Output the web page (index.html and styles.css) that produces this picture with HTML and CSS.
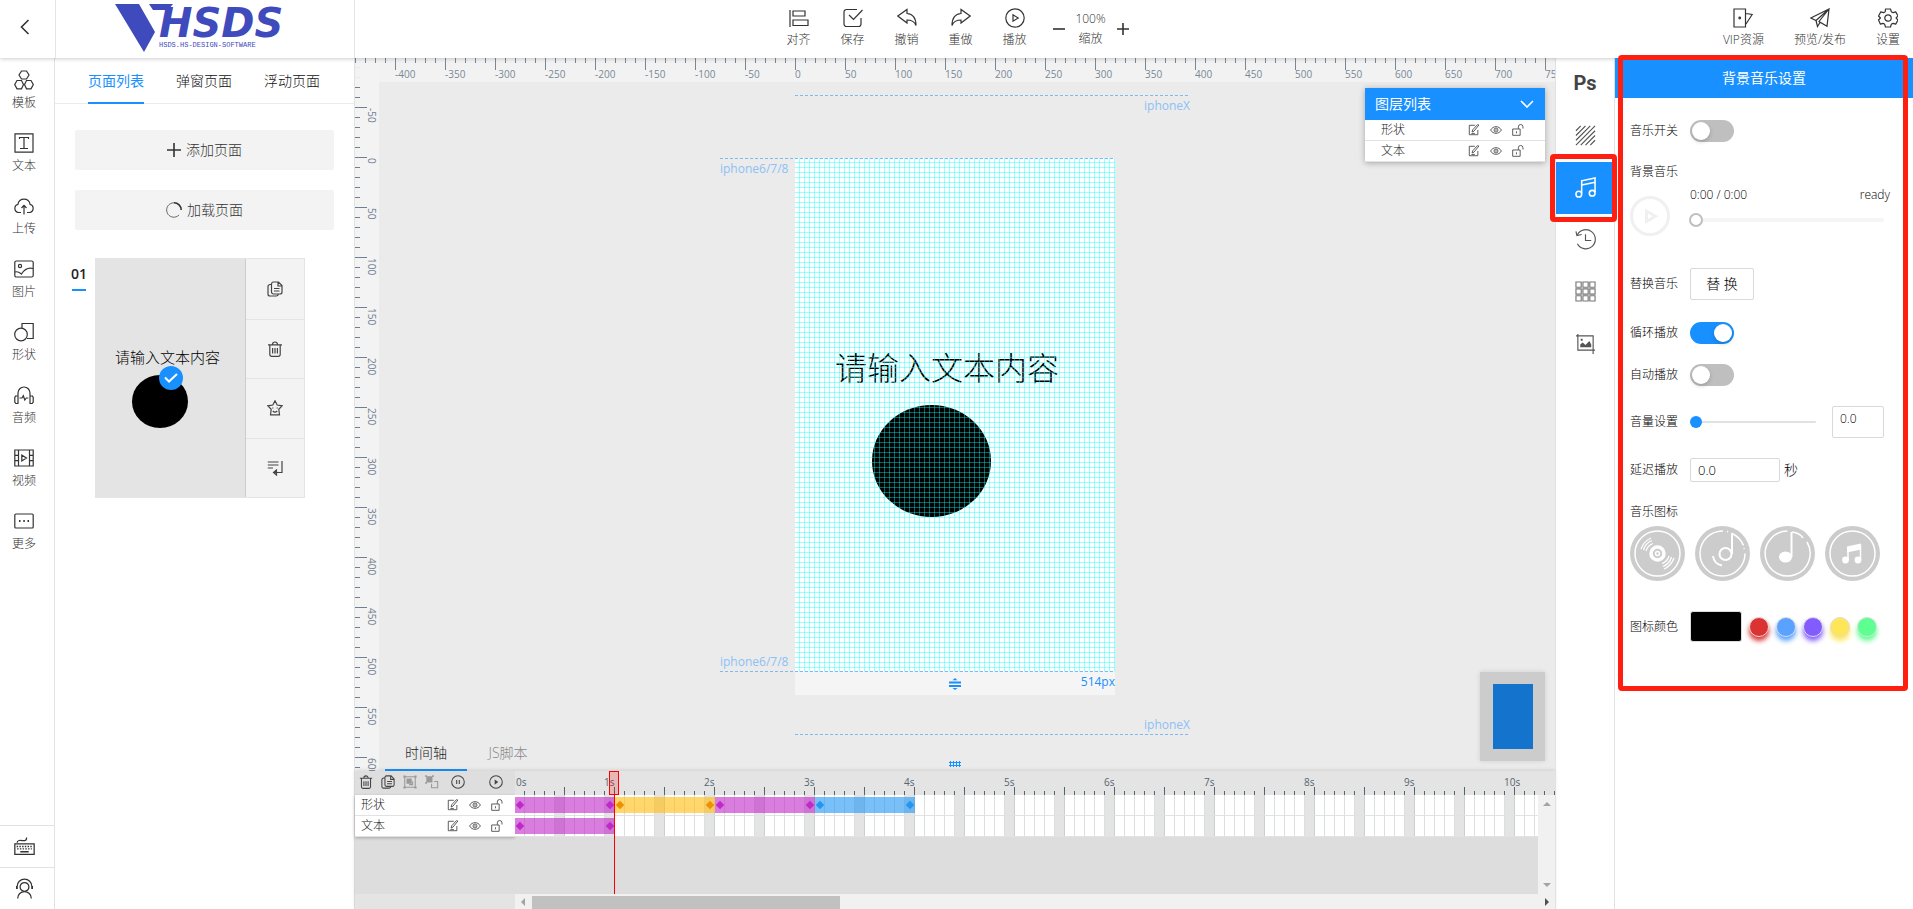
FILE: index.html
```html
<!DOCTYPE html>
<html lang="zh-CN">
<head>
<meta charset="utf-8">
<title>HSDS</title>
<link rel="stylesheet" href="styles.css">
</head>
<body>
<svg class="sprite" aria-hidden="true">
  <symbol id="i-edit" viewBox="0 0 14 14"><path d="M8 1.5H1.5v11h10V7M12.7 1.2 7 8.3l-2.2 1 .6-2.5L11 .8zM4 11h4"/></symbol>
  <symbol id="i-eye" viewBox="0 0 14 14"><path d="M.7 7C3.6 1.800 10.400 1.800 13.300 7 10.400 12.200 3.600 12.200.7 7z"/><circle cx="7" cy="7" r="2.3"/><circle cx="7" cy="7" r=".4"/></symbol>
  <symbol id="i-lock" viewBox="0 0 14 14"><path d="M.8 5.8h8.700v7.400H.8zM5.200 8.500v2.400M7.400 5.600V3.300a2.700 2.700 0 0 1 5.400 0v2"/></symbol>
  <symbol id="i-copy" viewBox="0 0 16 16"><path d="M6 1h5.500L15 4.500V11a2 2 0 0 1-2 2H6.500a2 2 0 0 1-2-2V3a2 2 0 0 1 1.500-2zM11 1v4h4M7 7.500h5.500M7 10h5.500M4.500 3.500H3a2 2 0 0 0-2 2V13a2 2 0 0 0 2 2h6.500a2 2 0 0 0 1.800-2"/></symbol>
  <symbol id="i-trash" viewBox="0 0 16 16"><path d="M1 3.800h14M5.500 3.500a2.500 2.500 0 0 1 5 0M2.800 4v9.500a1.800 1.800 0 0 0 1.800 1.800h6.800a1.800 1.800 0 0 0 1.800-1.800V4M5.600 7v5.500M8 7v5.500M10.400 7v5.500"/></symbol>
</svg>

<header class="topbar">
  <button class="back" aria-label="返回"><svg viewBox="0 0 10 16" width="10" height="16"><path d="M8.500 1 1.500 8l7 7"/></svg></button>
  <div class="brand">
    <svg width="184" height="50" viewBox="0 0 184 50" role="img" aria-label="VHSDS">
      <path class="mark" d="M2 0h24l16 28-11 20zM36 0h24l-5 6H40z"/>
      <text class="brand-name" x="46" y="33">HSDS</text>
      <text class="brand-sub" x="46" y="43">HSDS.HS-DESIGN-SOFTWARE</text>
    </svg>
  </div>
  <nav class="tools">
    <button class="tool"><svg viewBox="0 0 20 20"><path d="M1 2v17M4 3h12v5H4zM4 12h15v5.500H4z"/></svg>对齐</button>
    <button class="tool"><svg viewBox="0 0 20 20"><path d="M14 1.500H3.500a2.500 2.500 0 0 0-2.500 2.500v12a2.500 2.500 0 0 0 2.500 2.500h12a2.500 2.500 0 0 0 2.500-2.500V10M6 7l4.500 4.500L19.500 2"/></svg>保存</button>
    <button class="tool"><svg viewBox="0 0 20 20"><path d="M.800 8 10 1.500V5.500c6 .5 9 5 9 12-1.500-4-4-5.500-9-5.500v3z"/></svg>撤销</button>
    <button class="tool"><svg viewBox="0 0 20 20"><path d="M19.200 8 10 1.500V5.500c-6 .5-9 5-9 12 1.500-4 4-5.500 9-5.500v3z"/></svg>重做</button>
    <button class="tool"><svg viewBox="0 0 20 20"><circle cx="10" cy="10" r="9.200"/><path d="M8 6.800v6.400l5.200-3.200z"/></svg>播放</button>
    <div class="zoom">
      <button aria-label="缩小"><svg viewBox="0 0 12 12" width="12" height="12"><path d="M0 6h12"/></svg></button>
      <div class="zoom-value"><span>100%</span><span>缩放</span></div>
      <button aria-label="放大"><svg viewBox="0 0 12 12" width="12" height="12"><path d="M0 6h12M6 0v12"/></svg></button>
    </div>
  </nav>
  <nav class="actions">
    <button class="tool"><svg viewBox="0 0 20 20"><path d="M1 1h11.500v18H1zM13 5.500l6.200 1L13 16"/><circle cx="6.700" cy="10" r=".8"/></svg>VIP资源</button>
    <button class="tool"><svg viewBox="0 0 20 20"><path d="M19 1 .800 10l5.200 2.500zM6 12.500 7.500 18.500 10 14.500M19 1 9 13.500l8 4.800z"/></svg>预览/发布</button>
    <button class="tool"><svg viewBox="0 0 20 20"><path d="M7.500 1h5l.8 2.700 1.700 1 2.700-.8 2.300 4.100-1.900 2 1.900 2-2.300 4.100-2.700-.8-1.700 1-.8 2.700h-5l-.8-2.700-1.700-1-2.700.8L0.500 12l1.900-2-1.900-2L2.800 3.900l2.700.8 1.700-1z" stroke-linejoin="round"/><circle cx="10" cy="10" r="3.200"/></svg>设置</button>
  </nav>
</header>

<main class="main">
  <nav class="rail">
    <button class="rail-item"><svg viewBox="0 0 20 20"><path d="M7.500 1h5L15 5l-2.500 4h-5L5 5zM3 10.500h4.500L9.500 14.500 7.500 18.800H3L.7 14.500zM12.500 10.500H17l2.300 4-2.300 4.300h-4.500l-2-4.300z"/></svg>模板</button>
    <button class="rail-item"><svg viewBox="0 0 20 20"><path d="M1 .800h18v18.400H1zM5.500 6V4.500h9V6M10 4.500v11M6 15.500h8"/></svg>文本</button>
    <button class="rail-item"><svg viewBox="0 0 20 20"><path d="M7 16.500H4.500a4.200 4.200 0 0 1-.6-8.200 6.200 6.200 0 0 1 12.200 0 4.200 4.200 0 0 1-.6 8.200H13M10 18.500V9.500M7.500 12 10 9.300 12.500 12"/></svg>上传</button>
    <button class="rail-item"><svg viewBox="0 0 20 20"><rect x=".8" y="2" width="18.400" height="16" rx="1.500"/><circle cx="6" cy="7" r="1.600"/><path d="M1 13c3-1 4 0 6.500 2C10 11 13 8 19 9.500"/></svg>图片</button>
    <button class="rail-item"><svg viewBox="0 0 20 20"><circle cx="7" cy="12.500" r="6.300"/><path d="M8 6V1.500h11.200v15H13"/></svg>形状</button>
    <button class="rail-item"><svg viewBox="0 0 20 20"><path d="M4 11V8a6 6 0 0 1 12 0v3M4 11H1.500l-.7 1.500V17l1 1.500H4zM16 11h2.500l.7 1.500V17l-1 1.500H16zM5.500 13H8l1.300-2.300 1.500 4.300 1.500-2h2"/></svg>音频</button>
    <button class="rail-item"><svg viewBox="0 0 20 20"><path d="M.800 2h18.400v16H.800zM4.500 2v16M15.500 2v16M1 7.300h3.500M1 12.600h3.500M15.500 7.300H19M15.500 12.600H19M7.800 7v6l4.700-3z"/></svg>视频</button>
    <button class="rail-item"><svg viewBox="0 0 20 20"><rect x=".8" y="3" width="18.400" height="14" rx="1"/><path d="M5 10h1.500M9.300 10h1.500M13.500 10H15" stroke-width="1.800"/></svg>更多</button>
    <div class="rail-bottom">
      <button aria-label="快捷键"><svg viewBox="0 0 20 20" width="21" height="21"><path d="M.800 7.500h18.400v10H.800z"/><path d="M2.500 10h15M3 12.300h14" stroke-dasharray="1.400 1.200"/><path d="M6 15h8M3 6.500C3 3 8 4.500 10 4.500S12 2.500 12 1.500"/></svg></button>
      <button aria-label="客服"><svg viewBox="0 0 20 20" width="21" height="21"><circle cx="10" cy="8.500" r="4.200"/><path d="M3 10.500V8a7 7 0 0 1 14 0v2.500M2.500 7.500v3M17.500 7.500v3M3.500 19.500c0-4 3-6.500 6.500-6.500s6.500 2.500 6.500 6.500"/></svg></button>
    </div>
  </nav>

  <section class="pages">
    <div class="tabs" role="tablist">
      <button class="tab active" role="tab">页面列表</button>
      <button class="tab" role="tab">弹窗页面</button>
      <button class="tab" role="tab">浮动页面</button>
    </div>
    <div class="page-actions">
      <button class="wide"><svg viewBox="0 0 14 14" width="14" height="14"><path d="M0 7h14M7 0v14"/></svg>添加页面</button>
      <button class="wide"><svg viewBox="0 0 16 16" width="16" height="16"><path d="M8 .800A7.200 7.200 0 0 1 15.200 8"/><path class="faint" d="M8 .800A7.200 7.200 0 1 0 13 13"/></svg>加载页面</button>
    </div>
    <div class="page-row">
      <span class="page-no">01</span>
      <div class="page-card">
        <div class="thumb">
          <span class="thumb-text">请输入文本内容</span>
          <span class="thumb-dot"></span>
          <span class="thumb-check"><svg viewBox="0 0 14 10" width="14" height="10"><path d="M1 4.500 5 8.500 13 1"/></svg></span>
        </div>
        <div class="page-tools">
          <button aria-label="复制"><svg width="16" height="16"><use href="#i-copy"/></svg></button>
          <button aria-label="删除"><svg width="16" height="16"><use href="#i-trash"/></svg></button>
          <button aria-label="收藏"><svg viewBox="0 0 16 16" width="16" height="16"><path d="M8 .800 10.200 5l4.900.800-3.300 3.500.7 5.600H3.500l.7-5.600L.9 5.800 5.800 5zM5.800 7.500v1M10.200 7.500v1M5.800 11c1.300 1.500 3.100 1.500 4.400 0"/></svg></button>
          <button aria-label="插入"><svg viewBox="0 0 16 16" width="16" height="16"><path d="M.800 2h10.700M.800 5h10.700M.800 8H6M15 1v11.500H7M9.500 10 6.500 12.500l3 2.500z"/></svg></button>
        </div>
      </div>
    </div>
  </section>

  <section class="stage">
    <div class="workspace">
      <div class="ruler ruler-v"><i></i><i>-50</i><i>0</i><i>50</i><i>100</i><i>150</i><i>200</i><i>250</i><i>300</i><i>350</i><i>400</i><i>450</i><i>500</i><i>550</i><i>600</i></div>
      <div class="ruler ruler-h"><i></i><i>-400</i><i>-350</i><i>-300</i><i>-250</i><i>-200</i><i>-150</i><i>-100</i><i>-50</i><i>0</i><i>50</i><i>100</i><i>150</i><i>200</i><i>250</i><i>300</i><i>350</i><i>400</i><i>450</i><i>500</i><i>550</i><i>600</i><i>650</i><i>700</i><i>750</i></div>

      <div class="board">
        <div class="guide guide-x-top"><span>iphoneX</span></div>
        <div class="guide guide-6-top"><span>iphone6/7/8</span></div>
        <div class="artboard">
          <div class="art-text">请输入文本内容</div>
          <div class="art-circle"></div>
          <div class="art-grid"></div>
        </div>
        <div class="guide guide-6-bottom"><span>iphone6/7/8</span></div>
        <div class="board-foot">
          <svg viewBox="0 0 12 12" width="12" height="12"><path d="M0 3.500h12v2H0zM0 7h12v2H0zM6 0l2.500 2.200h-5zM6 12l2.500-2H3.500z"/></svg>
          <span>514px</span>
        </div>
        <div class="guide guide-x-bottom"><span>iphoneX</span></div>
      </div>

      <aside class="layers">
        <header>图层列表<svg viewBox="0 0 14 8" width="14" height="8"><path d="M1 1l6 6 6-6"/></svg></header>
        <div class="layer"><span>形状</span><svg><use href="#i-edit"/></svg><svg><use href="#i-eye"/></svg><svg><use href="#i-lock"/></svg></div>
        <div class="layer"><span>文本</span><svg><use href="#i-edit"/></svg><svg><use href="#i-eye"/></svg><svg><use href="#i-lock"/></svg></div>
      </aside>

      <div class="minimap"><span></span></div>
      <div class="grip"></div>
      <div class="bottom-tabs" role="tablist">
        <button class="active" role="tab">时间轴</button>
        <button role="tab">JS脚本</button>
      </div>
    </div>

    <div class="timeline">
      <div class="track-names">
        <div class="track-tools">
          <button aria-label="删除"><svg><use href="#i-trash"/></svg></button>
          <button aria-label="复制"><svg><use href="#i-copy"/></svg></button>
          <button class="off" aria-label="组合"><svg viewBox="0 0 16 16"><path d="M2 2h12v12H2z"/><path class="solid" d="M4 4h6v6H4zM.500.500h2.500v2.500H.500zM13 .500h2.500v2.500H13zM.500 13h2.500v2.500H.500zM13 13h2.500v2.500H13z"/><path d="M11 7v4H7"/></svg></button>
          <button class="off" aria-label="取消组合"><svg viewBox="0 0 16 16"><path class="solid" d="M1.500 1.500h7v7h-7zM.200.200h2v2h-2zM8 .200h2v2H8zM.200 8h2v2h-2z"/><path d="M7.500 10v4.500h7v-7h-4"/></svg></button>
          <button aria-label="暂停"><svg viewBox="0 0 16 16"><circle cx="8" cy="8" r="7.200"/><path d="M6.500 5.800v4.400M9.500 5.800v4.400"/></svg></button>
          <button class="play" aria-label="播放"><svg viewBox="0 0 16 16"><circle cx="8" cy="8" r="7.200"/><path class="solid" d="M6.500 5v6l4-3z"/></svg></button>
        </div>
        <div class="name-list">
          <div class="layer"><span>形状</span><svg><use href="#i-edit"/></svg><svg><use href="#i-eye"/></svg><svg><use href="#i-lock"/></svg></div>
          <div class="layer"><span>文本</span><svg><use href="#i-edit"/></svg><svg><use href="#i-eye"/></svg><svg><use href="#i-lock"/></svg></div>
        </div>
        <div class="names-foot"></div>
      </div>
      <div class="tracks">
        <div class="seconds"><i>0s</i><i>1s</i><i>2s</i><i>3s</i><i>4s</i><i>5s</i><i>6s</i><i>7s</i><i>8s</i><i>9s</i><i>10s</i></div>
        <div class="track-body">
          <div class="track-area">
            <div class="track"><span class="clip magenta"></span><span class="clip amber"></span><span class="clip magenta"></span><span class="clip blue"></span></div>
            <div class="track"><span class="clip magenta"></span></div>
          </div>
          <div class="vscroll"><i class="up"></i><i class="down"></i></div>
        </div>
        <div class="hscroll"><i class="left"></i><span></span><i class="right"></i></div>
        <div class="playhead"></div>
      </div>
    </div>
  </section>

  <nav class="side">
    <button class="ps">Ps</button>
    <button aria-label="背景"><svg viewBox="0 0 22 22"><path d="M1 6 6 1M1 11 11 1M1 16 16 1M1 21 21 1M6 21 21 6M11 21 21 11M16 21l5-5"/></svg></button>
    <button class="active" aria-label="背景音乐"><svg viewBox="0 0 22 22"><path d="M7 17V4l14-3v15M7 8.500 21 5.500"/><circle cx="4" cy="18" r="3"/><circle cx="18" cy="17" r="3"/></svg></button>
    <button aria-label="历史"><svg viewBox="0 0 22 22"><path d="M2.500 6a10 10 0 1 1 0 9.500M1 2.500 2 7l5-1.200M11 5.500v6.500h6"/></svg></button>
    <button class="grid-btn" aria-label="网格"><svg viewBox="0 0 22 22"><path d="M1 1h5.500v5.500H1zM8.300 1h5.500v5.500H8.300zM15.500 1H21v5.500h-5.500zM1 8.300h5.500v5.500H1zM8.300 8.300h5.500v5.500H8.300zM15.500 8.300H21v5.500h-5.500zM1 15.500h5.500V21H1zM8.300 15.500h5.500V21H8.300zM15.500 15.500H21V21h-5.500z"/></svg></button>
    <button aria-label="裁剪"><svg viewBox="0 0 22 22"><path d="M1 3h18v19M3 1v17h18"/><path class="solid" d="M5.500 15V12l2.500-2 3 2.500L15 8.500l2 3.500v3zM6 6h2v2H6z"/></svg></button>
    <span class="mark-box"></span>
  </nav>

  <section class="settings">
    <h2>背景音乐设置</h2>
    <form class="form">
      <div class="field"><label for="on">音乐开关</label><input id="on" class="switch" type="checkbox"></div>
      <div class="field music"><span>背景音乐</span></div>
      <div class="player">
        <button type="button" class="play-btn" aria-label="播放"><svg viewBox="0 0 40 40" width="40" height="40"><circle cx="20" cy="20" r="18.500"/><path d="M16.500 15v10.500l9-5.200z"/></svg></button>
        <div class="player-main">
          <div class="player-time"><span>0:00 / 0:00</span><span>ready</span></div>
          <input class="seek" type="range" min="0" max="100" value="0" aria-label="进度">
        </div>
      </div>
      <div class="field replace"><label for="rep">替换音乐</label><button id="rep" type="button" class="btn">替 换</button></div>
      <div class="field"><label for="loop">循环播放</label><input id="loop" class="switch" type="checkbox" checked></div>
      <div class="field"><label for="auto">自动播放</label><input id="auto" class="switch" type="checkbox"></div>
      <div class="field"><label for="vol">音量设置</label><input id="vol" class="volume" type="range" min="0" max="1" value="0"><input class="vol-num" type="text" value="0.0" aria-label="音量"></div>
      <div class="field"><label for="delay">延迟播放</label><input id="delay" class="delay" type="text" value="0.0"><span class="unit">秒</span></div>
      <div class="field line"><span>音乐图标</span></div>
      <div class="discs">
        <button type="button" aria-label="唱片"><svg viewBox="0 0 55 55"><circle class="disc" cx="27.500" cy="27.500" r="27.500"/><circle cx="27.500" cy="27.500" r="22.500" stroke-width="1.500"/><circle cx="27.500" cy="27.500" r="6.500" stroke-width="3.500"/><circle cx="27.500" cy="27.500" r="2" stroke-width="1.500"/><path d="M11 23q3-8 10-11M13.500 24q2-7 8.500-9.500M16 25q1.500-5.500 7-7.500M44 32q-3 8-10 11M41.500 31q-2 7-8.500 9.500M39 30q-1.500 5.500-7 7.500" stroke-width="1.300"/></svg></button>
        <button type="button" aria-label="音符"><svg viewBox="0 0 55 55"><circle class="disc" cx="27.500" cy="27.500" r="27.500"/><path d="M28 5A22.500 22.500 0 1 0 50 27.500M37 7.500a22.500 22.500 0 0 1 11.500 12M32 5.500l1 .2M49 22l.2 1" stroke-width="1.500"/><circle cx="30.500" cy="28" r="6" stroke-width="2"/><path d="M37 28V7" stroke-width="2"/><path d="M18 30a11 11 0 0 0 9 9.500" stroke-width="2"/></svg></button>
        <button type="button" aria-label="单音符"><svg viewBox="0 0 55 55"><circle class="disc" cx="27.500" cy="27.500" r="27.500"/><path d="M27.500 5A22.500 22.500 0 1 0 47 16M32 6q8 1 11 6" stroke-width="1.500"/><path d="M31.500 31V6" stroke-width="2"/><ellipse class="fill" cx="25.500" cy="31" rx="6.500" ry="5.500"/></svg></button>
        <button type="button" aria-label="双音符"><svg viewBox="0 0 55 55"><circle class="disc" cx="27.500" cy="27.500" r="27.500"/><circle cx="27.500" cy="27.500" r="22.500" stroke-width="1.500"/><path class="fill" d="M22 20.500l14-3v6l-14 3z"/><path d="M23 34V21M35.500 34V19" stroke-width="1.500"/><circle class="fill" cx="20.500" cy="34" r="3.400"/><circle class="fill" cx="33" cy="34" r="3.400"/></svg></button>
      </div>
      <div class="field colors"><label for="black">图标颜色</label><button id="black" type="button" class="swatch" aria-label="黑"></button><button type="button" class="dot red" aria-label="红"></button><button type="button" class="dot sky" aria-label="蓝"></button><button type="button" class="dot violet" aria-label="紫"></button><button type="button" class="dot yellow" aria-label="黄"></button><button type="button" class="dot green" aria-label="绿"></button></div>
    </form>
    <span class="mark-box"></span>
  </section>
</main>
</body>
</html>
```
FILE: styles.css
```css
* { box-sizing: border-box; }
html, body { height: 100%; }
body {
  margin: 0;
  display: flex;
  flex-direction: column;
  overflow: hidden;
  background: #fff;
  color: #222;
  font: 12px/20px "Open Sans", "Noto Sans CJK SC", sans-serif;
  font-weight: 300;
}
button { border: 0; padding: 0; background: none; color: inherit; font: inherit; }
input { font: inherit; color: inherit; margin: 0; }
i { font-style: normal; }
svg { display: block; fill: none; stroke: currentColor; stroke-width: 1.2; }
svg .solid { fill: currentColor; stroke: none; }
.sprite { position: absolute; width: 0; height: 0; }

/* top bar */
.topbar {
  position: relative;
  z-index: 3;
  display: grid;
  grid-template-columns: 55px 300px 1fr;
  flex: 0 0 58px;
  background: #fff;
  color: #333;
  box-shadow: 0 1px 4px rgba(0, 0, 0, .2);
}
.back { display: grid; place-items: center; padding-right: 6px; padding-bottom: 4px; }
.back svg { stroke-width: 1.6; }
.brand { display: flex; justify-content: center; border-left: 1px solid #e4e4e4; border-right: 1px solid #e4e4e4; padding-top: 4px; }
.brand svg { overflow: visible; }
.brand .mark, .brand text { fill: #3f4abd; stroke: none; }
.brand-name { font: italic bold 40px "DejaVu Sans", sans-serif; }
.brand-sub { font: 7px "Liberation Mono", monospace; }
.tools { display: flex; justify-content: center; padding-right: 368px; }
.tool { width: 54px; padding-top: 8px; display: flex; flex-direction: column; align-items: center; white-space: nowrap; }
.tool svg { width: 20px; height: 20px; margin-bottom: 2px; }
.zoom { display: flex; align-items: center; gap: 12px; margin-left: 11px; padding-bottom: 1px; }
.zoom svg { stroke-width: 1.6; }
.zoom-value { display: flex; flex-direction: column; align-items: center; width: 28px; }
.actions { position: absolute; right: 0; top: 0; display: flex; }
.actions .tool { width: auto; margin-right: 25px; }
.actions .tool + .tool { margin-left: 5px; }
.actions .tool:last-child { margin-right: 13px; }

/* body columns */
.main { flex: 1; min-height: 0; display: grid; grid-template-columns: 55px 300px 1fr 60px 298px; }
.rail { display: flex; flex-direction: column; border-right: 1px solid #e2e2e2; color: #333; padding-top: 12px; padding-right: 6px; }
.rail-item { height: 63px; display: flex; flex-direction: column; align-items: center; }
.rail-item svg { width: 22px; height: 20px; margin-bottom: 3px; }
.rail-bottom { margin-top: auto; margin-right: -6px; }
.rail-bottom button { display: grid; place-items: center; width: 100%; height: 42px; border-top: 1px solid #e2e2e2; padding-right: 6px; }

.pages { border-right: 1px solid #e2e2e2; }
.tabs { display: flex; gap: 32px; height: 46px; padding-left: 33px; border-bottom: 1px solid #ececec; }
.tab { font-size: 14px; height: 46px; padding-top: 2px; border-bottom: 2px solid transparent; color: #111; }
.tab.active { color: #1890ff; border-color: #1890ff; font-weight: 400; }
.page-actions { display: grid; gap: 20px; padding: 26px 20px 28px; }
.wide { display: flex; align-items: center; justify-content: center; gap: 5px; height: 40px; background: #f3f3f3; border-radius: 2px; font-size: 14px; color: #333; }
.wide svg { stroke-width: 1.6; }
.wide .faint { stroke-width: 1; opacity: .7; }
.page-row { display: flex; align-items: flex-start; padding-left: 17px; }
.page-no { width: 14px; margin: 5px 9px 0 0; font: 600 14px/22px "Open Sans", sans-serif; border-bottom: 2px solid #1890ff; padding-bottom: 4px; display: flex; justify-content: center; color: #222; }
.page-card { display: flex; width: 210px; height: 240px; border: 1px solid #e4e4e4; }
.thumb { position: relative; width: 150px; background: #e4e4e4; border-right: 1px solid #ccc; }
.thumb-text { position: absolute; top: 88px; left: 19px; font-size: 15px; color: #000; white-space: nowrap; }
.thumb-dot { position: absolute; left: 36px; top: 116px; width: 56px; height: 53px; border-radius: 50%; background: #000; }
.thumb-check { position: absolute; left: 63px; top: 107px; width: 24px; height: 24px; border-radius: 50%; background: #1890ff; color: #fff; display: grid; place-items: center; }
.thumb-check svg { stroke-width: 2; }
.page-tools { flex: 1; display: grid; grid-template-rows: repeat(4, 1fr); background: #f3f3f3; color: #444; }
.page-tools button { display: grid; place-items: center; border-top: 1px solid #e4e4e4; }
.page-tools button:first-child { border-top: 0; }

/* stage */
.stage { min-width: 0; display: flex; flex-direction: column; }
.workspace { position: relative; flex: 1; min-height: 0; background: #ebebeb; overflow: hidden; }
.ruler { position: absolute; top: 0; left: 0; display: flex; overflow: hidden; background-color: #f3f3f3; color: #708090; font-size: 10px; line-height: 12px; font-weight: 400; }
.ruler i { flex: 0 0 50px; }
.ruler-h {
  right: 0; height: 24px; opacity: .92;
  background-image: repeating-linear-gradient(90deg, #708090 0 1px, transparent 1px 10px);
  background-size: 100% 5px;
  background-repeat: no-repeat;
}
.ruler-h i { padding-top: 10px; background: linear-gradient(#708090, #708090) no-repeat 0 0 / 1px 12px; }
.ruler-h i:first-child { flex-basis: 40px; background: none; }
.ruler-v {
  bottom: 0; width: 24px; flex-direction: column;
  background-image: repeating-linear-gradient(#708090 0 1px, transparent 1px 10px);
  background-size: 5px 100%;
  background-position: 0 -1px;
  background-repeat: no-repeat;
}
.ruler-v i { writing-mode: vertical-rl; width: 24px; padding: 1px 1px 0 0; background: linear-gradient(#708090, #708090) no-repeat 0 0 / 12px 1px; }
.ruler-v i:first-child { flex-basis: 49px; background: none; }

.board { position: absolute; top: 100px; left: 50%; width: 320px; margin-left: -160px; }
.artboard { position: relative; height: 514px; background: #fff; }
.art-text { position: absolute; top: 186px; left: 40px; font-size: 32px; line-height: 48px; color: #000; white-space: nowrap; }
.art-circle { position: absolute; left: 77px; top: 247px; width: 119px; height: 112px; border-radius: 50%; background: #000; }
.art-grid {
  position: absolute; inset: 0;
  background:
    repeating-linear-gradient(90deg, transparent 0 4px, rgba(0, 255, 255, .4) 4px 5px),
    repeating-linear-gradient(transparent 0 4px, rgba(0, 255, 255, .4) 4px 5px);
}
.board-foot { display: flex; justify-content: center; align-items: center; height: 23px; background: #f5f5f5; color: #1890ff; position: relative; }
.board-foot svg { fill: #1890ff; stroke: none; }
.board-foot span { position: absolute; right: 0; top: 0; font-weight: 400; }
.guide { position: absolute; z-index: 1; color: #8bc1f5; font-weight: 400; height: 1px; background: repeating-linear-gradient(90deg, #7fb9f2 0 3px, transparent 3px 5px); }
.guide span { position: absolute; }
.guide-x-top, .guide-x-bottom { left: 0; right: -75px; }
.guide-6-top, .guide-6-bottom { left: -75px; right: 0; }
.guide-x-top { top: -63px; }
.guide-x-top span { right: 0; top: 1px; }
.guide-6-top { top: 0; }
.guide-6-top span { left: 0; top: 1px; }
.guide-6-bottom { top: 513px; }
.guide-6-bottom span { left: 0; bottom: 0; }
.guide-x-bottom { top: 576px; }
.guide-x-bottom span { right: 0; bottom: 0; }

.layers { position: absolute; right: 10px; top: 30px; width: 180px; background: #fff; box-shadow: 0 1px 6px rgba(0, 0, 0, .3); }
.layers header { display: flex; justify-content: space-between; align-items: center; height: 32px; padding: 0 11px 0 10px; background: #1890ff; color: #fff; font-size: 14px; font-weight: 400; }
.layers header svg { stroke-width: 1.6; }
.layer { display: flex; align-items: center; height: 21px; border-bottom: 1px solid #e2e2e2; }
.layer span { margin-right: auto; }
.layer svg { width: 12px; height: 12px; margin-left: 10px; color: #444; stroke-width: 1; }
.layers .layer { padding: 0 21px 0 16px; }
.minimap { position: absolute; right: 10px; bottom: 10px; width: 65px; height: 89px; display: grid; place-items: center; background: #ccc; box-shadow: 0 0 5px rgba(0, 0, 0, .12); }
.minimap span { width: 40px; height: 65px; background: #1473cd; }
.grip { position: absolute; left: 50%; bottom: 4px; width: 12px; height: 6px; margin-left: -6px; background: radial-gradient(#1890ff 50%, transparent 60%) 0 0 / 3px 3px; }
.bottom-tabs { position: absolute; left: 30px; bottom: 0; display: flex; }
.bottom-tabs button { width: 82px; height: 36px; padding-top: 2px; font-size: 14px; color: #888; border-bottom: 2px solid transparent; }
.bottom-tabs .active { color: #222; border-color: #1890ff; }

/* timeline */
.timeline { position: relative; display: grid; grid-template-columns: 160px 1fr; height: 138px; background: #ddd; box-shadow: 0 -1px 4px rgba(0, 0, 0, .12); }
.track-names { display: flex; flex-direction: column; }
.track-tools { display: flex; align-items: center; gap: 8px; height: 24px; padding: 0 12px 2px 4px; background: #dedede; color: #444; }
.track-tools svg { width: 14px; height: 14px; }
.track-tools .off { color: #999; }
.track-tools button:nth-child(5) { margin-left: 4px; }
.track-tools .play { margin-left: auto; }
.name-list { background: #fff; box-shadow: 0 1px 3px rgba(0, 0, 0, .25); }
.name-list .layer { padding: 0 12px 0 6px; }
.names-foot { height: 15px; margin-top: auto; background: #e4e4e4; }
.tracks { position: relative; min-width: 0; display: flex; flex-direction: column; overflow: hidden; }
.seconds {
  display: flex; flex: 0 0 24px; overflow: hidden; color: #546570; font-size: 10px; line-height: 22px; font-weight: 400;
  background:
    repeating-linear-gradient(90deg, transparent 0 49px, #546570 49px 50px) 0 16px / 100% 8px no-repeat,
    repeating-linear-gradient(90deg, transparent 0 9px, #546570 9px 10px) 0 20px / 100% 4px no-repeat,
    #e4e4e4;
}
.seconds i { flex: 0 0 100px; }
.seconds i:first-child { flex-basis: 89px; padding-left: 1px; }
.track-body { flex: 1; display: flex; }
.track-area { flex: 1; min-width: 0; }
.track {
  display: flex; height: 21px; padding-top: 2px; border-bottom: 1px solid #e2e2e2;
  background:
    repeating-linear-gradient(90deg, transparent 0 40px, #e4e4e4 40px 49px, #c8d0d0 49px 50px),
    repeating-linear-gradient(90deg, #fff 0 9px, #dcdfe0 9px 10px);
}
.clip { width: 100px; height: 16px; display: flex; justify-content: space-between; align-items: center; padding: 0 2px; }
.clip::before, .clip::after { content: ""; width: 6px; height: 6px; transform: rotate(45deg); background: var(--key); }
.magenta { --key: #c028c8; background: rgba(192, 40, 200, .6); }
.amber { --key: #f09000; background: rgba(255, 189, 11, .6); }
.blue { --key: #2196f3; background: rgba(33, 150, 243, .6); }
.vscroll { width: 17px; background: #f1f1f1; display: flex; flex-direction: column; justify-content: space-between; align-items: center; padding: 7px 0; }
.vscroll i, .hscroll i { width: 0; height: 0; border: 4px solid transparent; }
.vscroll .up { border-top: 0; border-bottom-color: #a3a3a3; }
.vscroll .down { border-bottom: 0; border-top-color: #a3a3a3; }
.hscroll { display: flex; align-items: center; flex: 0 0 15px; background: #f1f1f1; padding: 0 6px; }
.hscroll .left { border-left: 0; border-right-color: #a3a3a3; margin-right: 7px; }
.hscroll span { width: 308px; height: 13px; margin-top: 2px; background: #c1c1c1; }
.hscroll .right { border-right: 0; border-left-color: #505050; margin-left: auto; }
.playhead { position: absolute; left: 94px; top: 0; width: 10px; height: 24px; border: 1px solid red; background: rgba(255, 0, 0, .2); }
.playhead::after { content: ""; position: absolute; left: 4px; top: 23px; width: 1px; height: 99px; background: red; }

/* right tool rail */
.side { position: relative; border-left: 1px solid #e2e2e2; border-right: 1px solid #e2e2e2; color: #555; z-index: 1; }
.side button { display: grid; place-items: center; width: 100%; height: 52px; padding-bottom: 2px; }
.side svg { width: 21px; height: 21px; }
.side .active { background: #1890ff; color: #fff; }
.side .active svg { stroke-width: 1.6; }
.side .grid-btn { color: #777; }
.side .ps { font: bold 20px Roboto, sans-serif; color: #444; }
.mark-box { position: absolute; border: 5px solid #ff1f10; border-radius: 4px; pointer-events: none; z-index: 4; }
.side .mark-box { left: -6px; top: 96px; width: 67px; height: 68px; }

/* settings */
.settings { position: relative; min-width: 0; z-index: 4; }
.settings > .mark-box { left: 3px; right: 5px; top: -3px; height: 636px; }
.settings h2 { margin: 0; height: 40px; line-height: 40px; text-align: center; background: #1890ff; color: #fff; font-size: 14px; font-weight: 400; }
.form { padding: 22px 23px 0 15px; color: #000; }
.field { display: flex; align-items: center; margin-bottom: 20px; }
.field label { width: 60px; }
.music { margin-bottom: 3px; }
.line { margin-bottom: 4px; }
.replace { margin-bottom: 22px; }
.switch { appearance: none; width: 44px; height: 22px; border-radius: 11px; background: #bfbfbf; position: relative; }
.switch::after { content: ""; position: absolute; left: 2px; top: 2px; width: 18px; height: 18px; border-radius: 50%; background: #fff; box-shadow: 0 2px 4px rgba(0, 35, 11, .2); }
.switch:checked { background: #1890ff; }
.switch:checked::after { left: 24px; }
.player { display: grid; grid-template-columns: 59px 1fr; height: 51px; margin-bottom: 32px; }
.play-btn { align-self: end; justify-self: start; color: #f0f0f0; }
.play-btn svg { stroke-width: 3; }
.player-time { display: flex; justify-content: space-between; padding-left: 1px; margin-bottom: 8px; line-height: 20px; }
input[type="range"] { appearance: none; background: none; height: 14px; display: block; }
input[type="range"]::-webkit-slider-runnable-track { height: 4px; border-radius: 2px; background: #f5f5f5; }
input[type="range"]::-webkit-slider-thumb { appearance: none; width: 14px; height: 14px; margin-top: -5px; border: 2px solid #bfbfbf; border-radius: 50%; background: #fff; }
.seek { width: calc(100% - 6px); }
input.volume::-webkit-slider-runnable-track { height: 2px; background: #e1e1e1; }
input.volume::-webkit-slider-thumb { width: 12px; height: 12px; border: 0; background: #1890ff; }
.volume { width: 126px; }
.btn { width: 64px; height: 32px; border: 1px solid #d9d9d9; border-radius: 2px; font-size: 14px; }
.vol-num { width: 52px; height: 32px; margin-left: 16px; border: 1px solid #d9d9d9; border-radius: 2px; padding: 0 7px 8px; }
.delay { width: 90px; height: 24px; border: 1px solid #d9d9d9; border-radius: 2px; padding: 0 7px; font-size: 13px; }
.unit { margin-left: 4px; font-size: 14px; }
.discs { display: flex; gap: 10px; margin-bottom: 30px; }
.discs svg { width: 55px; height: 55px; stroke: #fff; }
.disc { fill: #ccc; stroke: none; }
.fill { fill: #fff; stroke: none; }
.swatch { width: 52px; height: 31px; margin-right: 7px; background: #000; border: 1px solid #ddd; border-radius: 3px; }
.dot { width: 20px; height: 20px; margin-right: 7px; border-radius: 50%; border: 1px solid #ddd; background: var(--c); box-shadow: 0 4px 5px var(--c); }
.red { --c: #dc3232; }
.sky { --c: #5aa2ff; }
.violet { --c: #835cff; }
.yellow { --c: #ffe659; }
.green { --c: #5cff90; }
```
